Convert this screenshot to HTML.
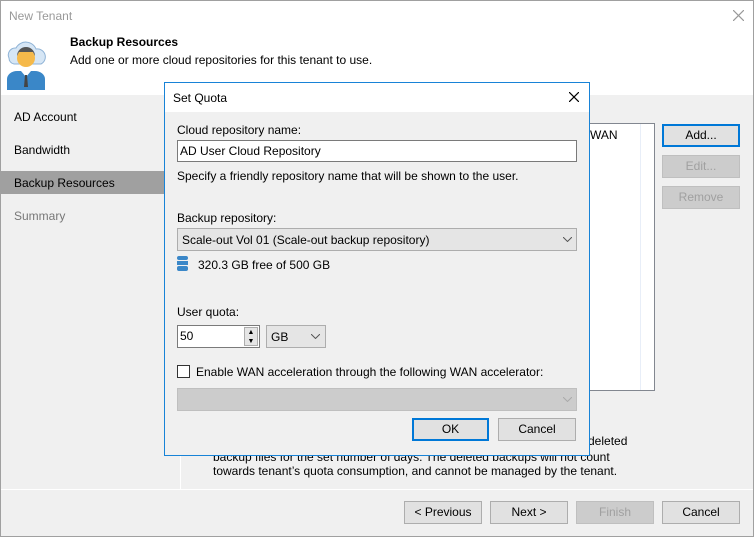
<!DOCTYPE html>
<html><head><style>
*{box-sizing:border-box;margin:0;padding:0}
body{width:754px;height:537px;position:relative;font-family:"Liberation Sans",sans-serif;font-size:12px;color:#000;background:#f0f0f0;overflow:hidden}
.a{position:absolute}
.btn{position:absolute;background:#e1e1e1;border:1px solid #adadad;text-align:center;line-height:21px;font-size:12px}
.dis{color:#a0a0a0;background:#cccccc;border-color:#bfbfbf}
.foc{border:2px solid #0078d7;line-height:19px}
</style></head><body>
<div class="a" style="left:0;top:0;width:754px;height:537px;border:1px solid #a0a0a0"></div>
<div class="a" style="left:1px;top:1px;width:752px;height:94px;background:#fff"></div>
<div class="a" style="left:9px;top:9px;color:#999;font-size:12px">New Tenant</div>
<svg class="a" style="left:733px;top:10px" width="11" height="11"><path d="M0 0L11 11M11 0L0 11" stroke="#999" stroke-width="1.2"/></svg>
<svg class="a" style="left:6px;top:34px" width="40" height="56" viewBox="0 0 40 56">
<path d="M3 24 a7 7 0 0 1 7-10 a11 11 0 0 1 20 1 a8 8 0 0 1 5 15 H8 a6 6 0 0 1 -5-6z" fill="#d6e6f5" stroke="#8fb3d6"/>
<circle cx="20" cy="24" r="9" fill="#f5b94a"/>
<path d="M11 22 a9 9 0 0 1 18 0 l-2-4 h-14z" fill="#555"/>
<path d="M1 56 v-11 a10 8 0 0 1 10-8 h18 a10 8 0 0 1 10 8 v11z" fill="#3a87c8"/>
<path d="M15 37 l5 6 l5-6z" fill="#fff"/><path d="M19 41 h2 l1 12 h-4z" fill="#444"/>
</svg>
<div class="a" style="left:70px;top:35px;font-weight:bold">Backup Resources</div>
<div class="a" style="left:70px;top:53px">Add one or more cloud repositories for this tenant to use.</div>
<div class="a" style="left:14px;top:110px">AD Account</div>
<div class="a" style="left:14px;top:143px">Bandwidth</div>
<div class="a" style="left:1px;top:171px;width:163px;height:23px;background:#a0a0a0"></div>
<div class="a" style="left:14px;top:176px">Backup Resources</div>
<div class="a" style="left:14px;top:209px;color:#777">Summary</div>
<div class="a" style="left:180px;top:390px;width:1px;height:99px;background:#fff"></div>
<div class="a" style="left:180px;top:123px;width:475px;height:268px;background:#fff;border:1px solid #828790"></div>
<div class="a" style="left:640px;top:124px;width:1px;height:266px;background:#e8eef8"></div>
<div class="a" style="left:590px;top:128px">WAN</div>
<div class="btn foc" style="left:662px;top:124px;width:78px;height:23px">Add...</div>
<div class="btn dis" style="left:662px;top:155px;width:78px;height:23px">Edit...</div>
<div class="btn dis" style="left:662px;top:186px;width:78px;height:23px">Remove</div>
<div class="a" style="left:588px;top:434px">deleted</div>
<div class="a" style="left:213px;top:450px">backup files for the set number of days. The deleted backups will not count</div>
<div class="a" style="left:213px;top:464px">towards tenant’s quota consumption, and cannot be managed by the tenant.</div>
<div class="a" style="left:1px;top:489px;width:752px;height:1px;background:#fff"></div>
<div class="btn" style="left:404px;top:501px;width:78px;height:23px">&lt; Previous</div>
<div class="btn" style="left:490px;top:501px;width:78px;height:23px">Next &gt;</div>
<div class="btn dis" style="left:576px;top:501px;width:78px;height:23px">Finish</div>
<div class="btn" style="left:662px;top:501px;width:78px;height:23px">Cancel</div>

<div class="a" style="left:164px;top:82px;width:426px;height:374px;background:#f0f0f0;border:1px solid #1883d7"></div>
<div class="a" style="left:165px;top:83px;width:424px;height:29px;background:#fff"></div>
<div class="a" style="left:173px;top:91px">Set Quota</div>
<svg class="a" style="left:569px;top:92px" width="10" height="10"><path d="M0 0L10 10M10 0L0 10" stroke="#000" stroke-width="1.2"/></svg>
<div class="a" style="left:177px;top:123px">Cloud repository name:</div>
<div class="a" style="left:177px;top:140px;width:400px;height:22px;background:#fff;border:1px solid #7a7a7a;padding:3px 2px">AD User Cloud Repository</div>
<div class="a" style="left:177px;top:169px">Specify a friendly repository name that will be shown to the user.</div>
<div class="a" style="left:177px;top:211px">Backup repository:</div>
<div class="a" style="left:177px;top:228px;width:400px;height:23px;background:#e5e5e5;border:1px solid #adadad;padding:4px 4px">Scale-out Vol 01 (Scale-out backup repository)</div>
<svg class="a" style="left:563px;top:237px" width="9" height="5"><path d="M0 0L4.5 4.5L9 0" fill="none" stroke="#555"/></svg>
<svg class="a" style="left:177px;top:256px" width="11" height="16"><g fill="#3a87c8"><rect y="0" width="11" height="4" rx="2"/><rect y="5" width="11" height="4"/><rect y="10" width="11" height="5" rx="2"/></g></svg>
<div class="a" style="left:198px;top:258px">320.3 GB free of 500 GB</div>
<div class="a" style="left:177px;top:305px">User quota:</div>
<div class="a" style="left:177px;top:325px;width:83px;height:23px;background:#fff;border:1px solid #7a7a7a;padding:3px 2px">50</div>
<div class="a" style="left:244px;top:327px;width:14px;height:19px;background:#e5e5e5;border:1px solid #adadad;font-size:7px;line-height:9px;text-align:center">▲<br>▼</div>
<div class="a" style="left:266px;top:325px;width:60px;height:23px;background:#e5e5e5;border:1px solid #adadad;padding:4px 4px">GB</div>
<svg class="a" style="left:311px;top:334px" width="9" height="5"><path d="M0 0L4.5 4.5L9 0" fill="none" stroke="#555"/></svg>
<div class="a" style="left:177px;top:365px;width:13px;height:13px;background:#fff;border:1px solid #333"></div>
<div class="a" style="left:196px;top:365px">Enable WAN acceleration through the following WAN accelerator:</div>
<div class="a" style="left:177px;top:388px;width:400px;height:23px;background:#cccccc;border:1px solid #bfbfbf"></div>
<svg class="a" style="left:563px;top:397px" width="9" height="5"><path d="M0 0L4.5 4.5L9 0" fill="none" stroke="#aaa"/></svg>
<div class="btn foc" style="left:412px;top:418px;width:77px;height:23px">OK</div>
<div class="btn" style="left:498px;top:418px;width:78px;height:23px">Cancel</div>
</body></html>
